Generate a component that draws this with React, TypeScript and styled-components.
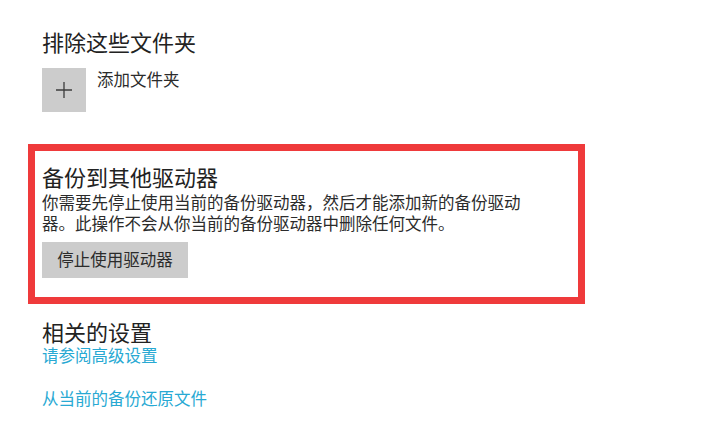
import styled, { createGlobalStyle } from "styled-components";

const GlobalStyle = createGlobalStyle`
  body {
    margin: 0;
    background: #ffffff;
    font-family: "Noto Sans CJK SC", "Noto Sans", sans-serif;
    color: #2b2b2b;
  }
`;

const Page = styled.div`
  display: flex;
  flex-direction: column;
  align-items: flex-start;
  padding: 27px 0 0 28px;
  width: 706px;
  height: 425px;
  box-sizing: border-box;
  overflow: hidden;
`;

const Section = styled.div<{ $top?: number }>`
  display: flex;
  flex-direction: column;
  align-items: flex-start;
  padding-left: 14px;
  margin-top: ${({ $top }) => $top ?? 0}px;
`;

const Title = styled.div`
  font-size: 22px;
  line-height: 28px;
  color: #222222;
`;

const AddRow = styled.div`
  display: flex;
  align-items: flex-start;
  gap: 11px;
  margin-top: 13px;
`;

const AddBox = styled.div`
  width: 44px;
  height: 44px;
  background: #cccccc;
  display: flex;
  align-items: center;
  justify-content: center;
`;

const AddLabel = styled.div`
  font-size: 16.5px;
  line-height: 21px;
  margin-top: 1px;
  color: #2b2b2b;
`;

const Highlight = styled.div`
  margin-top: 32px;
  width: 557px;
  height: 160px;
  box-sizing: border-box;
  border: 7px solid #ef3a3b;
  padding: 11px 0 0 7px;
  display: flex;
  flex-direction: column;
  align-items: flex-start;
`;

const Paragraph = styled.p`
  margin: 2px 0 0;
  max-width: 485px;
  font-size: 16.5px;
  line-height: 21px;
  color: #2b2b2b;
`;

const Button = styled.button`
  margin-top: 8px;
  width: 146px;
  height: 36px;
  border: none;
  background: #cccccc;
  font-family: inherit;
  font-size: 16.5px;
  color: #2b2b2b;
  padding: 0 0 2px;
`;

const Link = styled.a<{ $top?: number }>`
  display: block;
  margin-top: ${({ $top }) => $top ?? 0}px;
  font-size: 16.5px;
  line-height: 21px;
  color: #28a9d3;
  text-decoration: none;
`;

const PlusIcon = () => (
  <svg width="18" height="18" viewBox="0 0 18 18">
    <path d="M9 1v16M1 9h16" stroke="#3c3c3c" strokeWidth="1.3" fill="none" />
  </svg>
);

export default function App() {
  return (
    <>
      <GlobalStyle />
      <Page>
        <Section>
          <Title>排除这些文件夹</Title>
          <AddRow>
            <AddBox>
              <PlusIcon />
            </AddBox>
            <AddLabel>添加文件夹</AddLabel>
          </AddRow>
        </Section>

        <Highlight>
          <Title>备份到其他驱动器</Title>
          <Paragraph>
            你需要先停止使用当前的备份驱动器，然后才能添加新的备份驱动器。此操作不会从你当前的备份驱动器中删除任何文件。
          </Paragraph>
          <Button>停止使用驱动器</Button>
        </Highlight>

        <Section $top={13}>
          <Title>相关的设置</Title>
          <Link href="#">请参阅高级设置</Link>
          <Link href="#" $top={22}>
            从当前的备份还原文件
          </Link>
        </Section>
      </Page>
    </>
  );
}
